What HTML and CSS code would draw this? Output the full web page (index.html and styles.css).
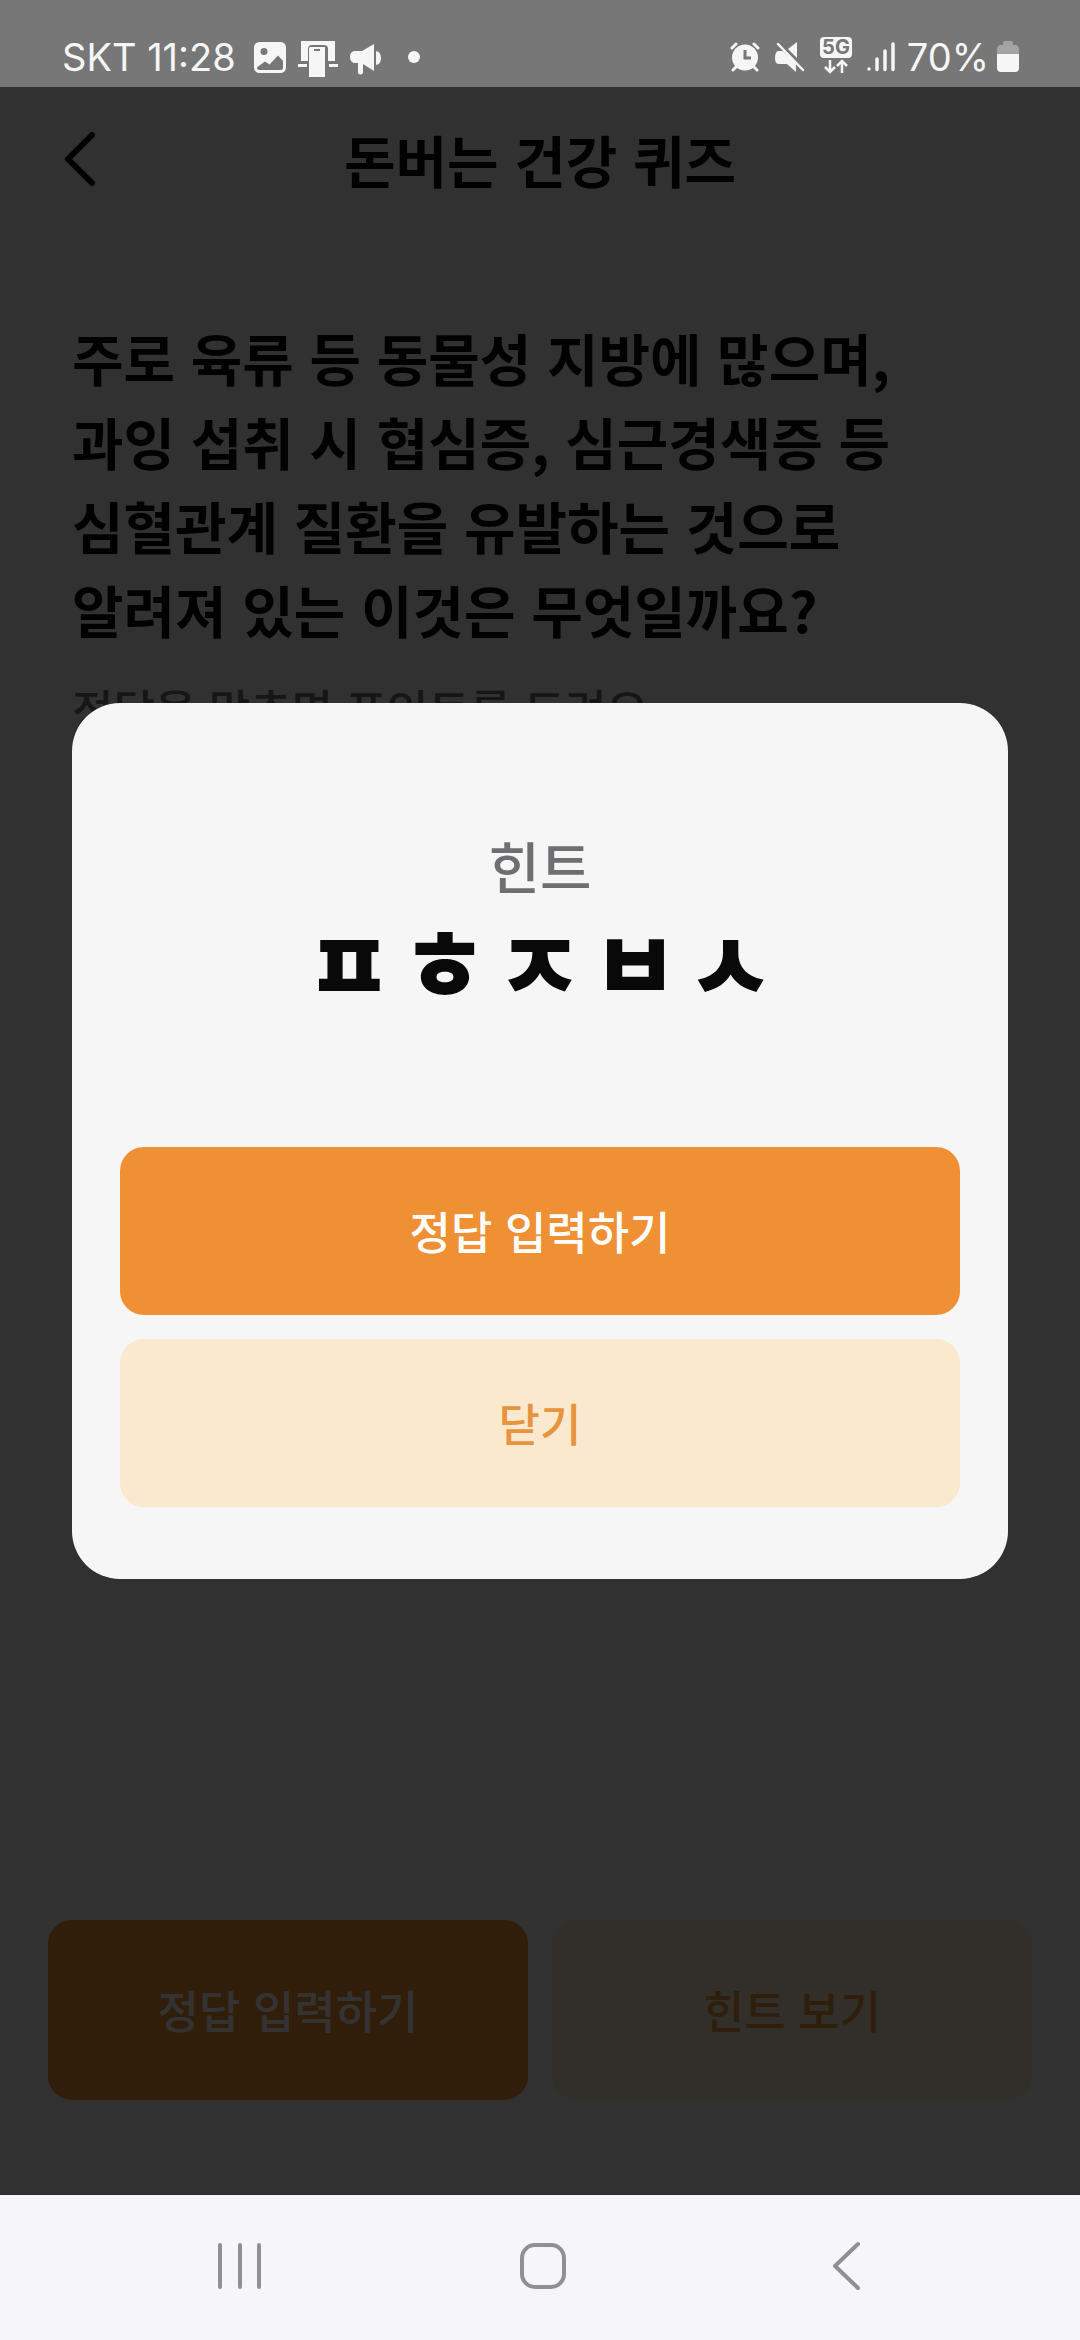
FILE: index.html
```html
<!DOCTYPE html>
<html lang="ko">
<head>
<meta charset="utf-8">
<meta name="viewport" content="width=device-width, initial-scale=1">
<title>돈버는 건강 퀴즈</title>
<link rel="stylesheet" href="styles.css">
</head>
<body>
<div class="status">
  <div class="status-group">
    <span class="status-text">SKT 11:28</span>
    <div class="status-icons">
      <svg width="32" height="44" viewBox="0 0 32 44" aria-hidden="true"><rect x="1.5" y="8.500" width="29" height="28" rx="4" fill="none" stroke="currentColor" stroke-width="3"/><path fill="currentColor" fill-rule="evenodd" d="M2 8h28v19l-6-6.500-8.500 9-4.500-3L2 33zM10 13a3.500 3.500 0 1 0 0 7 3.500 3.500 0 0 0 0-7z"/></svg>
      <svg width="40" height="44" viewBox="0 0 40 44" aria-hidden="true"><path fill="currentColor" d="M3 6h34v20h-7V14a4 4 0 0 0-4-4H14a4 4 0 0 0-4 4v12H3zM0 29h9v3H0zM31 29h9v3h-9zM12 12h15v30H11V13z"/><path stroke="#777" stroke-width="2" d="M16 15h6"/></svg>
      <svg width="32" height="44" viewBox="0 0 32 44" aria-hidden="true"><path fill="currentColor" d="M24 9v27l-11-7v8a2.500 2.500 0 0 1-5 0v-9H4q-4-1-4-6t4-6h8zM26 16q5 1 5 7t-5 7z"/></svg>
      <svg class="dot" width="12" height="44" viewBox="0 0 12 44" aria-hidden="true"><circle cx="6" cy="22" r="6" fill="currentColor"/></svg>
    </div>
  </div>
  <div class="status-group">
    <div class="status-icons status-icons-right">
      <svg width="30" height="44" viewBox="0 0 30 44" aria-hidden="true"><circle cx="15" cy="22.500" r="13" fill="currentColor"/><path stroke="currentColor" stroke-width="3" stroke-linecap="round" d="M2 13l4-4M28 13l-4-4M7 31l-4 4M23 31l4 4"/><path d="M15 15v8h6" fill="none" stroke="#777" stroke-width="3"/></svg>
      <svg width="30" height="44" viewBox="0 0 30 44" aria-hidden="true"><path fill="currentColor" d="M22 7v16L13 14zM3 16h5l13 12v9l-9-8H4q-4 0-4-6t3-7z"/><path stroke="currentColor" stroke-width="2.500" stroke-linecap="round" d="M3 9l25 26"/></svg>
      <svg width="32" height="44" viewBox="0 0 32 44" aria-hidden="true"><rect y="2" width="32" height="21" rx="4" fill="currentColor"/><text class="net-label" x="16" y="19" text-anchor="middle">5G</text><path d="M10 25v12M5 32l5 5 5-5M22 38V26M17 31l5-5 5 5" fill="none" stroke="currentColor" stroke-width="2.500"/></svg>
      <svg width="28" height="44" viewBox="0 0 28 44" aria-hidden="true"><path stroke="currentColor" stroke-width="3.500" stroke-linecap="round" d="M2 34v.1M10 24v10.500M18 16v18.500M26 9v25.500"/></svg>
    </div>
    <span class="status-text percent">70%</span>
    <svg width="22" height="44" viewBox="0 0 22 44" aria-hidden="true"><path fill="#a3a3a3" d="M0 19v-5q0-4 4-4h2V8q0-2 2-2h6q2 0 2 2v2h2q4 0 4 4v5z"/><path fill="currentColor" d="M0 19h22v14q0 4-4 4H4q-4 0-4-4z"/></svg>
  </div>
</div>

<div class="app">
  <header class="top">
    <button class="top-back" type="button" aria-label="뒤로"><svg width="34" height="54" viewBox="0 0 34 54" aria-hidden="true"><path d="M28 3L4 27l24 24" fill="none" stroke="currentColor" stroke-width="6" stroke-linecap="round" stroke-linejoin="round"/></svg></button>
    <h1 class="title">돈버는 건강 퀴즈</h1>
  </header>
  <main class="quiz">
    <h2 class="question">주로 육류 등 동물성 지방에 많으며,<br>과잉 섭취 시 협심증, 심근경색증 등<br>심혈관계 질환을 유발하는 것으로<br>알려져 있는 이것은 무엇일까요?</h2>
    <p class="guide">정답을 맞추면 포인트를 드려요</p>
  </main>
  <div class="actions">
    <button class="btn btn-primary" type="button">정답 입력하기</button>
    <button class="btn btn-soft" type="button">힌트 보기</button>
  </div>

  <div class="overlay">
    <section class="dialog" role="dialog" aria-modal="true" aria-labelledby="hint-title">
      <h2 class="dialog-title" id="hint-title">힌트</h2>
      <p class="hint"><span>ㅍ</span> <span>ㅎ</span> <span>ㅈ</span> <span>ㅂ</span> <span>ㅅ</span></p>
      <div class="dialog-actions">
        <button class="btn btn-primary" type="button">정답 입력하기</button>
        <button class="btn btn-soft" type="button">닫기</button>
      </div>
    </section>
  </div>
</div>

<nav class="sysnav">
  <button type="button" aria-label="최근 앱"><svg width="48" height="50" viewBox="0 0 48 50" aria-hidden="true"><path d="M4 4v42M24 4v42M43 4v42"/></svg></button>
  <button type="button" aria-label="홈"><svg width="48" height="50" viewBox="0 0 48 50" aria-hidden="true"><rect x="3" y="4" width="42" height="42" rx="13"/></svg></button>
  <button type="button" aria-label="뒤로 가기"><svg width="48" height="50" viewBox="0 0 48 50" aria-hidden="true"><path d="M36 3L13 25l23 22"/></svg></button>
</nav>
</body>
</html>
```
FILE: styles.css
```css
* {
  box-sizing: border-box;
}

body {
  margin: 0;
  min-height: 100vh;
  display: flex;
  flex-direction: column;
  background: #f6f6f6;
  color: #09090a;
  font-family: "Noto Sans CJK KR", sans-serif;
}

h1, h2, p {
  margin: 0;
}

button {
  border: 0;
  padding: 0;
  background: none;
  color: inherit;
  font: inherit;
}

svg {
  display: block;
}

/* System status bar */
.status {
  display: flex;
  justify-content: space-between;
  padding: 35px 61px 8px 62px;
  background: #777;
  color: #f6f6f6;
}

.status-group,
.status-icons {
  display: flex;
}

.status-group {
  gap: 18px;
}

.status-icons {
  gap: 12px;
}

.status-icons-right {
  gap: 15px;
}

.status-text {
  font-family: Inter, sans-serif;
  font-size: 38px;
  line-height: 44px;
}

.percent {
  margin: 0 -10px 0 -6px;
}

.dot {
  margin-left: 14px;
}

.net-label {
  fill: #777;
  font: 700 20px Inter, sans-serif;
}

/* Quiz screen */
.app {
  position: relative;
  flex: 1;
  display: flex;
  flex-direction: column;
}

.top {
  display: grid;
  grid-template-columns: 48px 1fr 48px;
  align-items: center;
  height: 144px;
  padding: 0 64px;
}

.title {
  font-size: 56px;
  line-height: 84px;
  text-align: center;
}

.quiz {
  flex: 1;
  padding: 84px 72px 0;
}

.question {
  font-size: 56px;
  line-height: 84px;
}

.guide {
  margin-top: 24px;
  color: #6f6f71;
  font-size: 45px;
  font-weight: 500;
  line-height: 68px;
}

.actions {
  display: grid;
  grid-template-columns: 1fr 1fr;
  gap: 24px;
  padding: 0 48px 95px;
}

.btn {
  height: 168px;
  border-radius: 24px;
  font-size: 45px;
  font-weight: 500;
  line-height: 68px;
}

.actions .btn {
  height: 180px;
}

.btn-primary {
  background: #ef9034;
  color: #fff;
}

.btn-soft {
  background: #fae9cf;
  color: #e7943f;
}

/* Hint dialog */
.overlay {
  position: absolute;
  inset: 0;
  display: flex;
  align-items: center;
  padding: 0 72px;
  background: rgba(0, 0, 0, 0.8);
}

.dialog {
  flex: 1;
  padding: 120px 48px 72px;
  border-radius: 48px;
  background: #f6f6f6;
  text-align: center;
}

.dialog-title {
  color: #6f6f71;
  font-size: 56px;
  font-weight: 500;
  line-height: 84px;
}

.hint {
  display: flex;
  justify-content: center;
  gap: 8px;
  font-size: 95px;
  font-weight: 900;
  line-height: 108px;
}

.dialog-actions {
  display: grid;
  gap: 24px;
  margin-top: 132px;
}

/* System navigation bar */
.sysnav {
  display: grid;
  grid-template-columns: repeat(3, 1fr);
  align-items: center;
  height: 145px;
  padding: 0 82px 4px 88px;
  background: #f6f6f9;
}

.sysnav button {
  justify-self: center;
}

.sysnav svg {
  fill: none;
  stroke: #909092;
  stroke-width: 4;
  stroke-linecap: round;
  stroke-linejoin: round;
}
```
